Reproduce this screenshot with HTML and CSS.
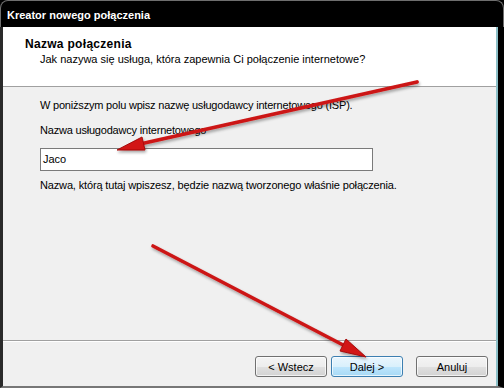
FILE: index.html
```html
<!DOCTYPE html>
<html lang="pl">
<head>
<meta charset="utf-8">
<title>Kreator nowego połączenia</title>
<link rel="stylesheet" href="styles.css">
</head>
<body>
<div class="window">
  <div class="titlebar">Kreator nowego połączenia</div>
  <div class="frame">
    <div class="client">
      <div class="header">
        <div class="h-title">Nazwa połączenia</div>
        <div class="h-sub">Jak nazywa się usługa, która zapewnia Ci połączenie internetowe?</div>
      </div>
      <div class="body">
        <p class="line1">W poniższym polu wpisz nazwę usługodawcy internetowego (ISP).</p>
        <p class="label">Nazwa usługodawcy internetowego</p>
        <div class="input">Jaco</div>
        <p class="note">Nazwa, którą tutaj wpiszesz, będzie nazwą tworzonego właśnie połączenia.</p>
      </div>
      <div class="footer">
        <button class="btn">&lt; Wstecz</button>
        <button class="btn primary">Dalej &gt;</button>
        <button class="btn cancel">Anuluj</button>
      </div>
    </div>
  </div>
  <svg class="arrows" width="504" height="388" viewBox="0 0 504 388">
    <defs>
      <filter id="sh" x="-10%" y="-10%" width="120%" height="130%">
        <feGaussianBlur in="SourceAlpha" stdDeviation="1.6"/>
        <feOffset dx="1" dy="2" result="b"/>
        <feComponentTransfer><feFuncA type="linear" slope="0.35"/></feComponentTransfer>
        <feMerge><feMergeNode/><feMergeNode in="SourceGraphic"/></feMerge>
      </filter>
    </defs>
    <g filter="url(#sh)" fill="#d21414" stroke="#a50d0d" stroke-linejoin="round">
      <line x1="417" y1="82" x2="140" y2="144" stroke-width="3.8" stroke="#cc1515" stroke-linecap="round"/>
      <polygon points="117,150 142,137 145,150" stroke-width="1"/>
      <line x1="153" y1="246" x2="345" y2="346" stroke-width="3.6" stroke="#cc1515" stroke-linecap="round"/>
      <polygon points="366,357 340,351 346,339" stroke-width="1"/>
    </g>
  </svg>
</div>
</body>
</html>
```
FILE: styles.css
```css
* { box-sizing: border-box; }
html, body { margin: 0; padding: 0; background: #000; }
body { width: 504px; height: 388px; overflow: hidden; font-family: "Liberation Sans", Arial, sans-serif; font-size: 11px; color: #000; }
.window { position: relative; width: 504px; height: 388px; display: flex; flex-direction: column; background: #000; }
.titlebar {
  height: 27px; flex: none;
  background: #000; color: #fff;
  font-weight: bold; font-size: 11px;
  padding: 8px 0 0 6px; line-height: 13px;
  border: 1px solid #6e6e6e; border-bottom: none;
  border-radius: 8px 8px 0 0;
}
.frame {
  flex: 1; display: flex;
  border-left: 3px solid #2a2a2a;
  border-right: 6px solid #000;
  border-bottom: 2px solid #777;
}
.client {
  flex: 1; display: flex; flex-direction: column;
  background: #f0f0f0;
  border-right: 2px solid #8cc0c8;
}
.header {
  height: 60px; flex: none; background: #fff;
  border-bottom: 1px solid #a0a0a0;
  padding: 10px 0 0 22px;
}
.h-title { font-weight: bold; font-size: 12px; line-height: 14px; letter-spacing: 0.3px; }
.h-sub { padding-left: 15px; line-height: 14px; margin-top: 1px; }
.body { flex: 1; padding: 12px 0 0 37px; border-bottom: 1px solid #a0a0a0; letter-spacing: -0.2px; }
.body p { margin: 0; line-height: 13px; }
.label { margin-top: 12px !important; }
.input {
  margin-top: 11px; width: 333px; height: 23px;
  background: #fff; border: 1px solid #7a7a7a;
  padding: 4px 0 0 2px; line-height: 13px; letter-spacing: 0;
}
.note { margin-top: 8px !important; letter-spacing: -0.15px; }
.footer {
  height: 45px; flex: none; display: flex; justify-content: flex-end;
  align-items: flex-start; padding: 14px 8px 0 0;
  border-top: 1px solid #fff;
}
.btn {
  width: 72px; height: 21px; margin: 0 0 0 4px; padding: 0;
  font: 11px "Liberation Sans", Arial, sans-serif; color: #000;
  border: 1px solid #707070; border-radius: 3px;
  background: linear-gradient(#f4f4f4 0%, #ededed 50%, #e0e0e0 51%, #d2d2d2 100%);
  box-shadow: inset 0 0 0 1px rgba(255,255,255,0.7);
}
.btn.primary {
  border-color: #3c7fb1;
  background: linear-gradient(#eaf6fd 0%, #d9f0fc 50%, #bee6fd 51%, #a7d9f5 100%);
}
.btn.cancel { margin-left: 13px; }
.arrows { position: absolute; left: 0; top: 0; pointer-events: none; }
```
